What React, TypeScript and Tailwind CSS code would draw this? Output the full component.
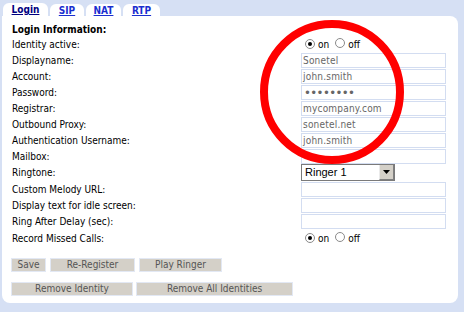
const font = { fontFamily: '"DejaVu Sans Condensed", "DejaVu Sans", sans-serif' };

const Radio = ({ checked }: { checked: boolean }) => (
  <span className="relative inline-block w-[10px] h-[10px] rounded-full border border-[#8a8a8a] bg-white">
    {checked && <span className="absolute left-[2px] top-[2px] w-[4px] h-[4px] rounded-full bg-black" />}
  </span>
);

const OnOff = () => (
  <div className="flex items-center pl-[4px] text-[10px] text-black">
    <Radio checked />
    <span className="ml-[3px]">on</span>
    <span className="ml-[6px]">
      <Radio checked={false} />
    </span>
    <span className="ml-[3px]">off</span>
  </div>
);

const TextBox = ({ value = '', dots = false }: { value?: string; dots?: boolean }) => (
  <div
    className={`w-[145px] h-[15px] border border-[#d3ddf1] bg-white pl-[1px] text-[#666] ${
      dots ? 'text-[13px] leading-[13px] tracking-[-0.6px] pl-[2px]' : 'text-[10px] leading-[13px] tracking-[0.2px]'
    }`}
  >
    {value}
  </div>
);

const Row = ({ label, children, h = 'h-4' }: { label: string; children?: React.ReactNode; h?: string }) => (
  <div className={`flex items-end ${h}`}>
    <div className="w-[289px] self-center text-[10px] text-black">{label}</div>
    {children}
  </div>
);

const Btn = ({ label, w }: { label: string; w: string }) => (
  <div className={`${w} h-[14px] bg-[#d4d0c8] border border-[#e2e8f4] text-center text-[10px] leading-[12px] text-[#555]`}>
    {label}
  </div>
);

export default function App() {
  return (
    <div className="relative w-[464px] h-[312px] overflow-hidden bg-[#d6e0f4]" style={font}>
      <div className="flex h-[16px] pt-[3px] pl-[3px] gap-[2px]">
        <div className="w-[45px] h-[13px] rounded-t-[6px] bg-white text-center text-[10px] leading-[14px] font-bold underline text-[#000080]">Login</div>
        <div className="w-[34px] h-[12px] mt-[1px] rounded-t-[6px] bg-white text-center text-[10px] leading-[13px] font-bold underline text-[#1a2ecf]">SIP</div>
        <div className="w-[35px] h-[12px] mt-[1px] rounded-t-[6px] bg-white text-center text-[10px] leading-[13px] font-bold underline text-[#1a2ecf]">NAT</div>
        <div className="w-[37px] h-[12px] mt-[1px] rounded-t-[6px] bg-white text-center text-[10px] leading-[13px] font-bold underline text-[#1a2ecf]">RTP</div>
      </div>

      <div className="ml-[2px] w-[456px] h-[287px] bg-white rounded-tr-[8px] rounded-b-[8px] pt-[7px] pl-[10px]">
        <div className="h-[13px] text-[10px] font-bold text-black leading-[13px]">Login Information:</div>
        <Row label="Identity active:">
          <div className="self-center">
            <OnOff />
          </div>
        </Row>
        <Row label="Displayname:"><TextBox value="Sonetel" /></Row>
        <Row label="Account:"><TextBox value="john.smith" /></Row>
        <Row label="Password:"><TextBox value="••••••••" dots /></Row>
        <Row label="Registrar:"><TextBox value="mycompany.com" /></Row>
        <Row label="Outbound Proxy:"><TextBox value="sonetel.net" /></Row>
        <Row label="Authentication Username:"><TextBox value="john.smith" /></Row>
        <Row label="Mailbox:"><TextBox /></Row>
        <div className="flex h-[17px]">
          <div className="w-[289px] self-center text-[10px] text-black">Ringtone:</div>
          <div className="flex w-[94px] h-[17px] border border-[#7a7a7a] bg-white">
            <div className="flex-1 pl-[3px] text-[11px] leading-[15px] text-black" style={{ fontFamily: '"Liberation Sans", Arial, sans-serif' }}>
              Ringer 1
            </div>
            <div className="w-[15px] h-[15px] bg-[#d4d0c8] border-l border-[#eaeaea] border-b border-r border-b-[#808080] border-r-[#808080] flex items-center justify-center">
              <svg width="7" height="4" viewBox="0 0 7 4">
                <path d="M0 0 H7 L3.5 4 Z" fill="#000" />
              </svg>
            </div>
          </div>
        </div>
        <Row label="Custom Melody URL:"><TextBox /></Row>
        <Row label="Display text for idle screen:"><TextBox /></Row>
        <Row label="Ring After Delay (sec):"><TextBox /></Row>
        <div className="flex h-[18px] items-center">
          <div className="w-[289px] text-[10px] text-black">Record Missed Calls:</div>
          <OnOff />
        </div>

        <div className="flex gap-[4px] mt-[11px] ml-[-1px]">
          <Btn label="Save" w="w-[35px]" />
          <Btn label="Re-Register" w="w-[85px]" />
          <Btn label="Play Ringer" w="w-[83px]" />
        </div>
        <div className="flex gap-[3px] mt-[10px] ml-[-1px]">
          <Btn label="Remove Identity" w="w-[122px]" />
          <Btn label="Remove All Identities" w="w-[157px]" />
        </div>
      </div>

      <svg className="absolute left-0 top-0 pointer-events-none" width="464" height="312">
        <circle cx="332" cy="92" r="68" fill="none" stroke="#ff0000" strokeWidth="8" />
      </svg>
    </div>
  );
}
